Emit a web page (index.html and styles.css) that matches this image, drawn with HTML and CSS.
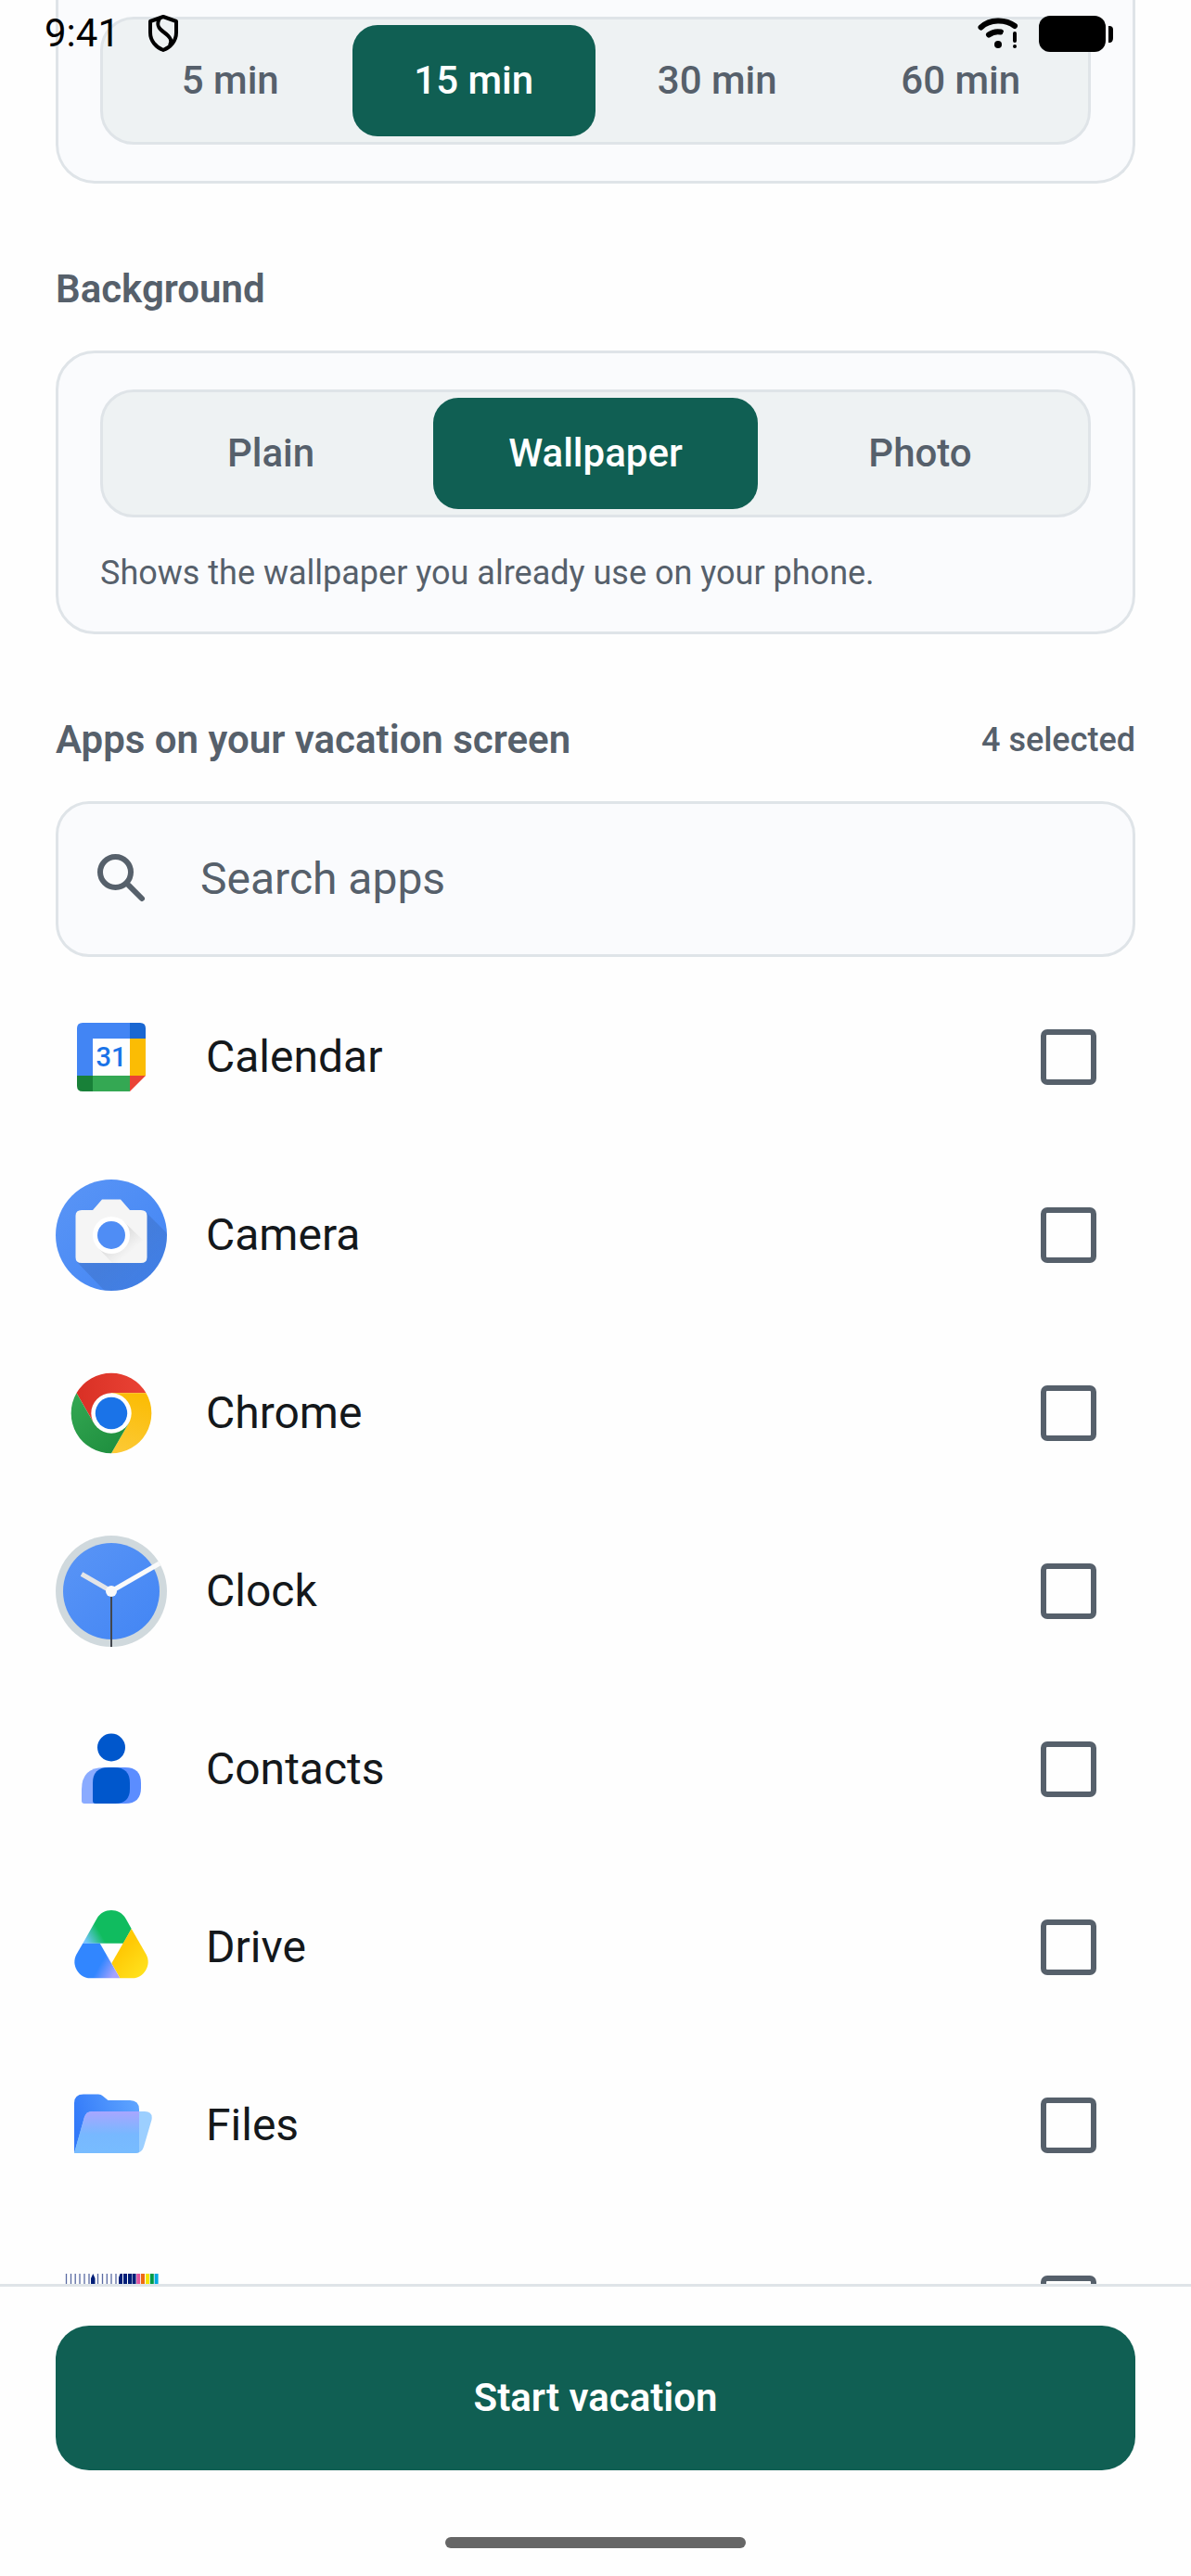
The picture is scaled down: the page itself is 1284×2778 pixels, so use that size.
FILE: index.html
```html
<!DOCTYPE html>
<html lang="en">
<head>
    <meta charset="UTF-8">
    <meta name="viewport" content="width=device-width, initial-scale=1.0">
    <title>Vacation Screen</title>
    <link rel="stylesheet" href="styles.css">
</head>
<body>
    <!-- System status bar, floats over the scrolled content -->
    <div class="status-bar">
        <div class="status-left">
            <span class="clock">9:41</span>
            <svg class="icon-shield" viewBox="0 0 34 40" fill="none" stroke="#000" stroke-width="4" stroke-linejoin="round">
                <path d="M17 2L31 7V19C31 28 25 35 17 38C9 35 3 28 3 19V7Z"/>
                <path d="M13 4C9 11 12 15 18 19C25 24 27 28 24 33"/>
            </svg>
        </div>
        <div class="status-right">
            <svg class="icon-wifi" viewBox="0 0 44 34" fill="none" stroke="#000" stroke-linecap="round">
                <path d="M3.500 10.500C13 1.500 30 1.500 40 9" stroke-width="6"/>
                <path d="M12 18.500C16 15.500 20 14.500 25 15.500" stroke-width="6"/>
                <path d="M30 13L27 20" stroke="#eef2f3" stroke-width="2"/>
                <circle cx="22" cy="29" r="4" fill="#000" stroke="none"/>
                <path d="M40 17V25" stroke-width="4"/>
                <circle cx="40" cy="31" r="2" fill="#000" stroke="none"/>
            </svg>
            <svg class="icon-battery" viewBox="0 0 80 39">
                <rect width="72" height="39" rx="12"/>
                <path d="M75 11h1q4 0 4 4v9q0 5-4 5h-1z"/>
            </svg>
        </div>
    </div>

    <main class="content">
        <section class="card card-first">
            <div class="segmented">
                <button type="button" class="segment">5 min</button>
                <button type="button" class="segment active">15 min</button>
                <button type="button" class="segment">30 min</button>
                <button type="button" class="segment">60 min</button>
            </div>
        </section>

        <div class="section-header">
            <h2>Background</h2>
        </div>
        <section class="card">
            <div class="segmented">
                <button type="button" class="segment">Plain</button>
                <button type="button" class="segment active">Wallpaper</button>
                <button type="button" class="segment">Photo</button>
            </div>
            <p class="hint">Shows the wallpaper you already use on your phone.</p>
        </section>

        <div class="section-header">
            <h2>Apps on your vacation screen</h2>
            <span class="count">4 selected</span>
        </div>
        <label class="search">
            <svg class="icon-search" viewBox="0 0 24 24" fill="none" stroke="#56606b" stroke-width="2">
                <circle cx="9.500" cy="9.500" r="5.500"/>
                <path d="M14.300 14.300L19 19" stroke-linecap="round"/>
            </svg>
            <input type="text" placeholder="Search apps" aria-label="Search apps">
        </label>

        <div class="app-list">
            <label class="app-row">
                <svg class="app-icon" viewBox="0 0 120 120">
                    <path d="M80 23H29q-6 0-6 6V80H40V40H80Z" fill="#4285f4"/>
                    <path d="M80 23H91q6 0 6 6V40H80Z" fill="#1967d2"/>
                    <path d="M80 40H97V80H80Z" fill="#fbbc04"/>
                    <path d="M40 80H80V97H40Z" fill="#34a853"/>
                    <path d="M23 80H40V97H29q-6 0-6-6Z" fill="#188038"/>
                    <path d="M80 80H97L80 97Z" fill="#ea4335"/>
                    <text class="calendar-day" x="60" y="70" text-anchor="middle">31</text>
                </svg>
                <span class="app-name">Calendar</span>
                <input type="checkbox">
            </label>

            <label class="app-row">
                <svg class="app-icon" viewBox="0 0 120 120">
                    <defs>
                        <linearGradient id="camBg" x1="0" y1="0" x2="1" y2="1">
                            <stop offset="0" stop-color="#5a95f6"/>
                            <stop offset="1" stop-color="#4285f4"/>
                        </linearGradient>
                        <linearGradient id="camShade" x1="0" y1="0" x2="1" y2="1">
                            <stop offset="0.400" stop-color="#000" stop-opacity="0.100"/>
                            <stop offset="1" stop-color="#000" stop-opacity="0.020"/>
                        </linearGradient>
                        <linearGradient id="lensShade" x1="0" y1="0" x2="1" y2="1">
                            <stop offset="0.300" stop-color="#000" stop-opacity="0.120"/>
                            <stop offset="0.700" stop-color="#000" stop-opacity="0"/>
                        </linearGradient>
                        <clipPath id="camClip"><circle cx="60" cy="60" r="60"/></clipPath>
                    </defs>
                    <circle cx="60" cy="60" r="60" fill="url(#camBg)"/>
                    <path d="M98 36L140 78V140H72L23 89Z" fill="url(#camShade)" clip-path="url(#camClip)"/>
                    <path d="M28 33H40L50 21.500H70L80 33H92q6.500 0 6.500 6V84q0 6-6.500 6H28q-6.500 0-6.500-6V39q0-6 6.500-6Z" fill="#f5f5f5"/>
                    <path d="M74 46L98 69V84q0 6-6 6H61L46 74Z" fill="url(#lensShade)"/>
                    <circle cx="60" cy="60" r="20" fill="#fff"/>
                    <circle cx="60" cy="60" r="15" fill="#4f8df5"/>
                </svg>
                <span class="app-name">Camera</span>
                <input type="checkbox">
            </label>

            <label class="app-row">
                <svg class="app-icon" viewBox="0 0 120 120">
                    <defs>
                        <linearGradient id="chRed" x1="0" y1="0" x2="1" y2="0">
                            <stop offset="0" stop-color="#d93025"/>
                            <stop offset="1" stop-color="#ea4335"/>
                        </linearGradient>
                        <linearGradient id="chYellow" x1="0.600" y1="0" x2="0.400" y2="1">
                            <stop offset="0" stop-color="#fbbc04"/>
                            <stop offset="1" stop-color="#fcc934"/>
                        </linearGradient>
                        <linearGradient id="chGreen" x1="0" y1="0" x2="0.800" y2="1">
                            <stop offset="0" stop-color="#34a853"/>
                            <stop offset="1" stop-color="#1e8e3e"/>
                        </linearGradient>
                    </defs>
                    <path d="M60 60L41.200 70.800L22.500 38.300A43.300 43.300 0 0 1 97.500 38.300H60Z" fill="url(#chRed)"/>
                    <path d="M60 38.300H97.500A43.300 43.300 0 0 1 60 103.300L78.800 70.800L60 60Z" fill="url(#chYellow)"/>
                    <path d="M60 60L78.800 70.800L60 103.300A43.300 43.300 0 0 1 22.500 38.300L41.200 70.800Z" fill="url(#chGreen)"/>
                    <circle cx="60" cy="60" r="21.700" fill="#fff"/>
                    <circle cx="60" cy="60" r="17.200" fill="#1a73e8"/>
                </svg>
                <span class="app-name">Chrome</span>
                <input type="checkbox">
            </label>

            <label class="app-row">
                <svg class="app-icon" viewBox="0 0 120 120">
                    <circle cx="60" cy="60" r="60" fill="#d0d9dd"/>
                    <circle cx="60" cy="60" r="52" fill="url(#camBg)"/>
                    <path d="M60 60L28 41.500" stroke="#e3e5e8" stroke-width="5"/>
                    <path d="M60 60L112 30" stroke="#fafafa" stroke-width="5"/>
                    <path d="M60 60V120" stroke="#43474d" stroke-width="2"/>
                    <circle cx="60" cy="60" r="6" fill="#fafafa"/>
                </svg>
                <span class="app-name">Clock</span>
                <input type="checkbox">
            </label>

            <label class="app-row">
                <svg class="app-icon" viewBox="0 0 120 120">
                    <path d="M52 58H68V97H31q-3 0-3-3V82Q28 58 52 58Z" fill="#8aabff"/>
                    <path d="M60 58H75Q92 58 92 75V80Q92 97 75 97H60Z" fill="#5b8dff"/>
                    <path d="M57 58H63Q80 58 80 75V81Q80 97 64 97H43q-3 0-3-3V75Q40 58 57 58Z" fill="#0057cc"/>
                    <circle cx="60" cy="36.500" r="15" fill="#0057cc"/>
                </svg>
                <span class="app-name">Contacts</span>
                <input type="checkbox">
            </label>

            <label class="app-row">
                <svg class="app-icon" viewBox="0 0 120 120">
                    <defs>
                        <linearGradient id="drGreen" gradientUnits="userSpaceOnUse" x1="33" y1="55" x2="49" y2="46">
                            <stop offset="0" stop-color="#74c6ff"/>
                            <stop offset="1" stop-color="#10bc5f"/>
                        </linearGradient>
                        <linearGradient id="drYellow" gradientUnits="userSpaceOnUse" x1="72" y1="62" x2="95" y2="86">
                            <stop offset="0" stop-color="#ffc905"/>
                            <stop offset="1" stop-color="#ffe01c"/>
                        </linearGradient>
                        <linearGradient id="drBlue" gradientUnits="userSpaceOnUse" x1="46" y1="82" x2="62" y2="91">
                            <stop offset="0" stop-color="#3186ff"/>
                            <stop offset="1" stop-color="#a5a2ff"/>
                        </linearGradient>
                    </defs>
                    <path d="M29.300 55.700L44.300 29.300C51 17 69 17 75.700 29.300L81.700 40L73 55.700Z" fill="url(#drGreen)"/>
                    <path d="M81.700 40L97.500 67.500C104 79 95 93.300 82.700 93.300H69.300L60.300 77.300Z" fill="url(#drYellow)"/>
                    <path d="M29.300 55.700L22.500 67.500C16 79 25 93.300 37.300 93.300H69.300L47.700 55.700Z" fill="url(#drBlue)"/>
                </svg>
                <span class="app-name">Drive</span>
                <input type="checkbox">
            </label>

            <label class="app-row">
                <svg class="app-icon" viewBox="0 0 120 120">
                    <defs>
                        <linearGradient id="flBack" x1="0" y1="0.500" x2="1" y2="0.200">
                            <stop offset="0" stop-color="#3279f9"/>
                            <stop offset="1" stop-color="#5fa5ff"/>
                        </linearGradient>
                        <linearGradient id="flFront" x1="0" y1="0" x2="0" y2="1">
                            <stop offset="0" stop-color="#a8a6ff"/>
                            <stop offset="0.550" stop-color="#77b8ff"/>
                            <stop offset="1" stop-color="#78bcff"/>
                        </linearGradient>
                    </defs>
                    <path d="M20 89V36Q20 26.500 30 26.500H46Q49 26.500 51 28.500L56.500 33H80Q90 33 90 43V89Z" fill="url(#flBack)"/>
                    <path d="M20 90L31 51Q33 45 39 45H96Q105 45 103.500 54L95 83Q93 90 86 90Z" fill="#9ccfff"/>
                    <path d="M20 90L31 51Q33 45 39 45H90V89Q88 90 86 90Z" fill="url(#flFront)"/>
                </svg>
                <span class="app-name">Files</span>
                <input type="checkbox">
            </label>

            <label class="app-row">
                <svg class="app-icon" viewBox="0 0 120 120">
                    <path d="M11.500 28V92M16.500 28V92M21.200 28V92M26 28V92M31 28V92M36 28V92M45.500 28V92M50.500 28V92M55.300 28V92M60 28V92M65 28V92" stroke="#5b6ba3" stroke-width="1.300"/>
                    <path d="M40.300 28L42.500 33V92H38V33Z" fill="#001e78"/>
                    <path d="M68 92V32L69.500 28H72V92ZM73 28h4v64h-4ZM78 28h4v64h-4ZM82.600 28h4v64h-4Z" fill="#001e78"/>
                    <path d="M87.200 28h4v64h-4Z" fill="#e0559f"/>
                    <path d="M92 28h4v64h-4Z" fill="#ee6b10"/>
                    <path d="M97 28h4v64h-4Z" fill="#f2e500"/>
                    <path d="M101.800 28h4v64h-4Z" fill="#009a44"/>
                    <path d="M106.600 28h4v64h-4Z" fill="#00a8e0"/>
                </svg>
                <span class="app-name"></span>
                <input type="checkbox" aria-label="Select app">
            </label>
        </div>
    </main>

    <footer class="bottom-bar">
        <button type="button" class="start-btn">Start vacation</button>
        <div class="nav-handle"></div>
    </footer>
</body>
</html>
```
FILE: styles.css
```css
:root {
    --page: #fefefe;
    --surface: #fafbfd;
    --track: #eef2f3;
    --line: #dfe4e8;
    --muted: #56606b;
    --text: #14181b;
    --accent: #105f53;
}

* {
    box-sizing: border-box;
}

body {
    margin: 0;
    height: 100vh;
    display: flex;
    flex-direction: column;
    overflow: hidden;
    font-family: Roboto, sans-serif;
    background: var(--page);
    color: var(--text);
}

button, input {
    font-family: inherit;
    margin: 0;
}

/* Status bar */
.status-bar {
    position: absolute;
    top: 0;
    left: 0;
    right: 0;
    height: 72px;
    padding: 0 84px 0 48px;
    display: flex;
    justify-content: space-between;
    align-items: center;
    color: #000;
}

.status-left, .status-right {
    display: flex;
    align-items: center;
}

.status-left {
    gap: 30px;
}

.status-right {
    gap: 22px;
}

.clock {
    font-size: 42px;
    line-height: 48px;
}

.icon-shield {
    width: 34px;
    height: 40px;
}

.icon-wifi {
    width: 44px;
    height: 34px;
}

.icon-battery {
    width: 80px;
    height: 39px;
}

/* Scrolling content */
.content {
    flex: 1;
    min-height: 0;
    overflow: hidden;
    padding: 0 60px;
}

.card {
    padding: 39px 45px;
    background: var(--surface);
    border: 3px solid var(--line);
    border-radius: 42px;
}

.card-first {
    padding-top: 18px;
    border-top: none;
    border-top-left-radius: 0;
    border-top-right-radius: 0;
}

.segmented {
    display: flex;
    padding: 6px;
    background: var(--track);
    border: 3px solid var(--line);
    border-radius: 36px;
}

.segment {
    flex: 1;
    padding: 30px 0;
    font-size: 42px;
    line-height: 60px;
    font-weight: 500;
    color: var(--muted);
    background: none;
    border: none;
    border-radius: 27px;
    cursor: pointer;
}

.segment.active {
    background: var(--accent);
    color: #fff;
}

.hint {
    margin: 36px 0 0;
    font-size: 36px;
    line-height: 48px;
    color: var(--muted);
}

.section-header {
    display: flex;
    justify-content: space-between;
    align-items: center;
    margin: 84px 0 36px;
    color: var(--muted);
}

.section-header h2 {
    margin: 0;
    font-size: 42px;
    line-height: 60px;
    font-weight: 600;
}

.count {
    font-size: 36px;
    line-height: 48px;
    font-weight: 500;
}

.search {
    display: flex;
    align-items: center;
    gap: 48px;
    padding: 45px 33px;
    background: var(--surface);
    border: 3px solid var(--line);
    border-radius: 36px;
}

.icon-search {
    width: 72px;
    height: 72px;
    flex-shrink: 0;
}

.search input {
    flex: 1;
    min-width: 0;
    height: 72px;
    padding: 0;
    font-size: 48px;
    line-height: 72px;
    color: var(--text);
    background: none;
    border: none;
    outline: none;
}

.search input::placeholder {
    color: var(--muted);
    opacity: 1;
}

/* App list */
.app-list {
    margin-top: 12px;
}

.app-row {
    display: flex;
    align-items: center;
    gap: 42px;
    padding: 36px 42px 36px 0;
    cursor: pointer;
}

.app-icon {
    width: 120px;
    height: 120px;
    flex-shrink: 0;
}

.calendar-day {
    font-size: 29px;
    font-weight: 500;
    fill: #1a73e8;
}

.app-name {
    flex: 1;
    font-size: 48px;
    line-height: 72px;
}

.app-row input {
    appearance: none;
    width: 60px;
    height: 60px;
    border: 6px solid var(--muted);
    border-radius: 7px;
}

.app-row input:checked {
    background: var(--accent);
    border-color: var(--accent);
}

/* Bottom bar */
.bottom-bar {
    padding: 42px 60px 30px;
    background: var(--page);
    border-top: 3px solid var(--line);
}

.start-btn {
    display: block;
    width: 100%;
    padding: 48px 0;
    font-size: 42px;
    line-height: 60px;
    font-weight: 600;
    color: #fff;
    background: var(--accent);
    border: none;
    border-radius: 36px;
    cursor: pointer;
}

.nav-handle {
    width: 324px;
    height: 12px;
    margin: 72px auto 0;
    background: #666;
    border-radius: 6px;
}
```
